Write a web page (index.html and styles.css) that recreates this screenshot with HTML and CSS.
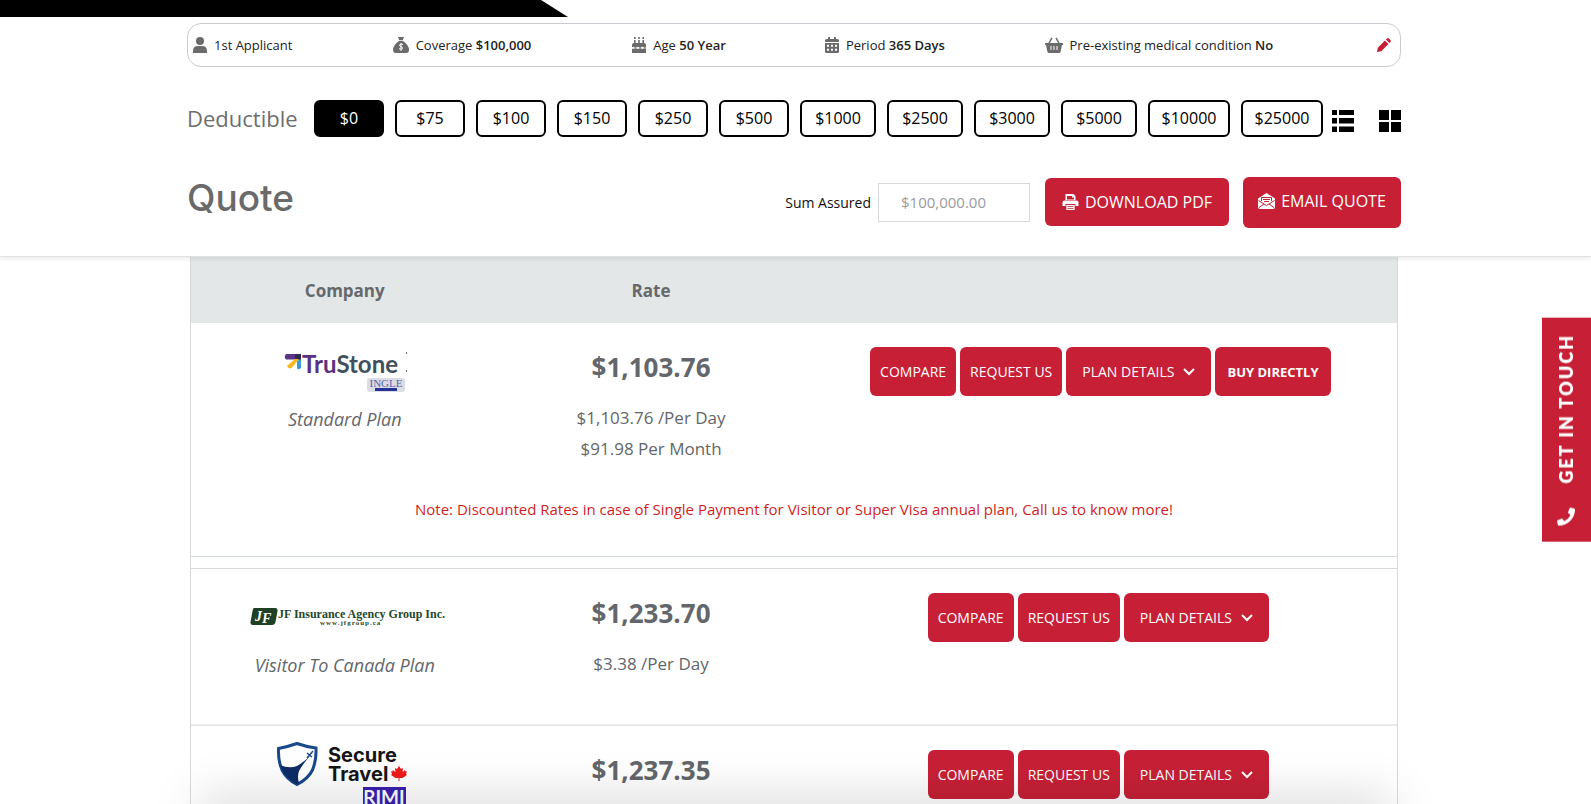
FILE: index.html
```html
<!DOCTYPE html>
<html lang="en">
<head>
<meta charset="utf-8">
<title>Quote</title>
<link rel="stylesheet" href="styles.css">
</head>
<body>
<header class="top">
  <div class="banner"></div>
  <div class="wrap">
    <ul class="summary">
      <li><svg class="ico" viewBox="0 0 14 16"><circle cx="7" cy="4" r="4"/><path d="M0 16v-2q0-5 5-5h4q5 0 5 5v2z"/></svg>1st Applicant</li>
      <li><svg class="ico" viewBox="0 0 16 16"><path d="M5 0h6L9.800 3.200H6.200zM6 4h4q6 4 6 9 0 3-3 3H3q-3 0-3-3 0-5 6-9z"/><path class="cut" d="M10 7.500Q8 6.400 6.800 7.600 6 9 8 9.700q2.300.7 1.400 2-1.200 1.200-3.400 0M8 6v8"/></svg>Coverage <b>$100,000</b></li>
      <li><svg class="ico" viewBox="0 0 14 16"><path d="M2 0h1.600v2H2zM6.200 0h1.600v2H6.200zM10.400 0H12v2h-1.600zM2 3h1.600v3h2.600V3h1.600v3h2.600V3H12v3q2 0 2 2v2.200q-1.200 1-2.300 0t-2.400 0-2.300 0-2.400 0-2.300 0-2.300 0V8q0-2 2-2zM0 11.600q1.200.8 2.300 0t2.400 0 2.300 0 2.400 0 2.300 0 2.300 0V16H0z"/></svg>Age <b>50 Year</b></li>
      <li><svg class="ico" viewBox="0 0 14 16"><path d="M3 0h2v2h4V0h2v2h1.500Q14 2 14 3.500V5H0V3.500Q0 2 1.500 2H3zM0 6h14v8.500q0 1.500-1.500 1.500h-11Q0 16 0 14.500z"/><path class="cut wide" d="M2 8.800h10M2 12.800h10" stroke-dasharray="2 2"/></svg>Period <b>365 Days</b></li>
      <li><svg class="ico" viewBox="0 0 18 16"><path d="M0 6h18v2h-1l-1.400 6.700Q15.300 16 14 16H4q-1.300 0-1.600-1.300L1 8H0z"/><path class="line" d="M3.500 7 7 .8M14.500 7 11 .8"/><path class="cut" d="M6 9v4M9 9v4M12 9v4"/></svg>Pre-existing medical condition <b>No</b></li>
      <li><button class="plain" aria-label="Edit"><svg class="pencil" viewBox="0 0 14 14"><path d="M0 14l.8-4.200L8 2.500 11.500 6 4.200 13.200zM9 1.600l1-1q1-1 2 0L13.400 2q1 1 0 2l-1 1z"/></svg></button></li>
    </ul>
    <div class="deduct">
      <h2 class="deduct-title">Deductible</h2>
      <div class="chips">
        <button class="chip on">$0</button>
        <button class="chip">$75</button>
        <button class="chip">$100</button>
        <button class="chip">$150</button>
        <button class="chip">$250</button>
        <button class="chip">$500</button>
        <button class="chip mid">$1000</button>
        <button class="chip mid">$2500</button>
        <button class="chip mid">$3000</button>
        <button class="chip mid">$5000</button>
        <button class="chip big">$10000</button>
        <button class="chip big">$25000</button>
      </div>
      <div class="views">
        <button class="plain" aria-label="List view"><svg class="view" viewBox="0 0 22 22"><path d="M0 0h5v5H0zM7 0h15v5H7zM0 8h5v5.500H0zM7 8h15v5.500H7zM0 16.500h5V22H0zM7 16.500h15V22H7z"/></svg></button>
        <button class="plain" aria-label="Grid view"><svg class="view" viewBox="0 0 22 22"><path d="M0 0h10v10H0zM12 0h10v10H12zM0 12h10v10H0zM12 12h10v10H12z"/></svg></button>
      </div>
    </div>
    <div class="quote">
      <h1 class="quote-title">Quote</h1>
      <div class="tools">
        <label class="sum-label" for="sum">Sum Assured</label>
        <input class="sum" id="sum" type="text" placeholder="$100,000.00">
        <button class="btn pdf"><svg class="btn-ico" viewBox="0 0 16 16"><path d="M3 0h8l2 2v4H3zM2 6.500h12q2 0 2 2V12h-3v-2H3v2H0V8.500q0-2 2-2zM3.800 11h8.400v5H3.800z"/><path class="red" d="M4.500 2v3.500h7V3.500H9.500V2z M5 12.200h6v.8H5zM5 14h6v.8H5z"/></svg>DOWNLOAD PDF</button>
        <button class="btn email"><svg class="btn-ico" viewBox="0 0 17 16"><path d="M0 5.500 8.500 0 17 5.500V14q0 2-2 2H2q-2 0-2-2z"/><path class="redline" d="M3.500 8V4.500h10V8M5 6.500h7M6 8.500h5M.5 7.500l8 5 8-5M1 14.500l5-3.500M16 14.500 11 11"/></svg>EMAIL QUOTE</button>
      </div>
    </div>
  </div>
</header>

<main class="wrap main">
  <table class="rates">
    <thead>
      <tr><th class="c-company">Company</th><th class="c-rate">Rate</th><th class="c-act"></th></tr>
    </thead>
    <tbody>
      <tr class="row">
        <td>
          <svg class="logo" viewBox="2 0 200 72" role="img" aria-label="TruStone Ingle">
            <path fill="#5b3486" d="M43 20h14v5.500H43q-2.500-2.700 0-5.500z"/><path fill="#2f2a55" d="M52 20h6v6h-6z"/><path fill="#f5b81c" d="M44 32l8-7h4l-7.500 9q-3 1.500-4.500-2z"/><path fill="#3d9bd4" d="M54 27l4-2v9l-2.500 1.500q-1.500-.5-1.500-2z"/>
            <text class="trustone" x="59" y="39"><tspan fill="#5a3180">Tru</tspan><tspan fill="#41505c">Stone</tspan></text>
            <rect x="124" y="44" width="38" height="14" rx="3" fill="#dcdde4"/>
            <text class="ingle" x="143" y="53">INGLE</text><path fill="#26319a" d="M132 54h22v3h-22z"/>
            <path fill="#777" d="M163 18h1v2h-1zM163 36h1v2h-1z"/>
          </svg>
          <p class="plan">Standard Plan</p>
        </td>
        <td>
          <p class="price">$1,103.76</p>
          <p class="per">$1,103.76 /Per Day</p>
          <p class="per">$91.98 Per Month</p>
        </td>
        <td>
          <div class="acts">
            <button class="btn act">COMPARE</button>
            <button class="btn act">REQUEST US</button>
            <button class="btn act details">PLAN DETAILS<svg class="chev" viewBox="0 0 12 8"><path d="M1 1l5 5 5-5"/></svg></button>
            <button class="btn act buy">BUY DIRECTLY</button>
          </div>
        </td>
      </tr>
      <tr><td class="note" colspan="3">Note: Discounted Rates in case of Single Payment for Visitor or Super Visa annual plan, Call us to know more!</td></tr>
      <tr class="gap"><td colspan="3"></td></tr>
      <tr class="row tall">
        <td>
          <svg class="logo" viewBox="1 -1 200 72" role="img" aria-label="JF Insurance Agency Group Inc.">
            <path fill="#1f4023" d="M10 27h21q3 0 2.500 3l-2 11q-.6 3-3.500 3H9q-3 0-2.500-3l2-11q.5-3 1.500-3z"/>
            <text class="jf" x="11" y="40">J<tspan dy="2">F</tspan></text>
            <text class="jf-name" x="34" y="37">JF Insurance Agency Group Inc.</text>
            <text class="jf-web" x="76" y="44">www.jfgroup.ca</text>
          </svg>
          <p class="plan">Visitor To Canada Plan</p>
        </td>
        <td>
          <p class="price">$1,233.70</p>
          <p class="per">$3.38 /Per Day</p>
        </td>
        <td>
          <div class="acts">
            <button class="btn act">COMPARE</button>
            <button class="btn act">REQUEST US</button>
            <button class="btn act details">PLAN DETAILS<svg class="chev" viewBox="0 0 12 8"><path d="M1 1l5 5 5-5"/></svg></button>
          </div>
        </td>
      </tr>
      <tr class="row tall">
        <td>
          <svg class="logo" viewBox="1 -1 200 72" role="img" aria-label="Secure Travel RIMI">
            <path fill="#fff" stroke="#17498c" stroke-width="3" d="M34.500 10.500Q43 9 53 5.500q10 3.500 19 4.500.5 12-3.500 22-4.500 9-15.500 14.500Q42.500 41 38 32q-4-9-3.500-21.500z"/>
            <path fill="#0d2c66" d="M36 27q9 4 17 1 7-4 13-10-8 9-11 15-2 6 0 12l-2 1.500Q40 40 36 27z"/><path stroke="#17498c" stroke-width="1.500" d="M63 15l5 4M69 13l-6 7"/>
            <text class="secure" x="84" y="24">Secure</text><text class="secure" x="84" y="43">Travel</text>
            <path fill="#f01a1a" d="M155 28l2 3 2-1-.5 4 2.500-2 .5 1.500 1.500-.2-1 2.700 1 1-4.500 3h-3v3h-1v-3h-3l-4.500-3 1-1-1-2.700 1.500.2.500-1.500 2.500 2-.5-4 2 1z"/>
            <path fill="#3c1fb0" d="M119 49h43v23h-43z"/><text class="rimi" x="140" y="66">RIMI</text>
          </svg>
          <p class="plan">Standard Plan</p>
        </td>
        <td>
          <p class="price">$1,237.35</p>
        </td>
        <td>
          <div class="acts">
            <button class="btn act">COMPARE</button>
            <button class="btn act">REQUEST US</button>
            <button class="btn act details">PLAN DETAILS<svg class="chev" viewBox="0 0 12 8"><path d="M1 1l5 5 5-5"/></svg></button>
          </div>
        </td>
      </tr>
    </tbody>
  </table>
</main>

<a class="touch" href="#contact"><svg class="phone" viewBox="0 0 512 512"><path d="M493 25 389 1c-11-3-23 3-27 14l-48 112c-4 10-1 21 7 28l61 50c-36 76-98 139-177 177l-50-61c-7-8-18-11-28-7L15 362c-11 5-17 16-14 27l24 104c3 11 12 19 24 19 256 0 463-207 463-463 0-12-8-21-19-24z"/></svg><span>GET IN TOUCH</span></a>
<div class="edge"></div>
</body>
</html>
```
FILE: styles.css
```css
* { box-sizing: border-box; }
html { height: 100%; }
body {
  margin: 0;
  height: 100%;
  overflow: hidden;
  background: #fff;
  color: #222;
  font-family: "Open Sans", "Noto Sans", sans-serif;
  font-size: 13px;
}
h1, h2, p, ul { margin: 0; padding: 0; }
button, input { font: inherit; }
button { cursor: pointer; }
.wrap { padding: 0 190px 0 187px; }
.top {
  position: relative;
  background: #fff;
  border-bottom: 1px solid #dfe1e3;
  box-shadow: 0 2px 5px rgba(0, 0, 0, .08);
}
.banner {
  height: 17px;
  width: 568px;
  background: #000;
  clip-path: polygon(0 0, 541px 0, 100% 100%, 0 100%);
}
.summary {
  display: grid;
  grid-template-columns: 200fr 240fr 193fr 220fr 333fr 23px;
  align-items: center;
  height: 44px;
  margin-top: 6px;
  padding: 0 0 0 5px;
  border: 1px solid #c9ccd0;
  border-radius: 14px;
  list-style: none;
}
.summary li { display: flex; align-items: center; white-space: pre; }
.summary b { font-weight: 600; }
.ico { height: 16px; margin-right: 7px; fill: #6b6b6b; }
.cut { fill: none; stroke: #fff; stroke-width: 1; }
.wide { stroke-width: 2; }
.line { fill: none; stroke: #6b6b6b; stroke-width: 1.500; }
.plain { display: block; padding: 0; border: 0; background: none; }
.pencil { display: block; width: 14px; height: 14px; fill: #c72036; }
.deduct { display: flex; align-items: center; margin-top: 32px; }
.deduct-title { color: #6d6e70; font-size: 22px; font-weight: 400; line-height: 38px; }
.chips { display: flex; gap: 11px; margin: 0 9px 0 auto; }
.chip {
  width: 70px;
  height: 37px;
  padding: 0 0 1px;
  border: 2px solid #000;
  border-radius: 6px;
  background: #fff;
  color: #000;
  font-size: 16px;
}
.chip.on { background: #000; color: #fff; }
.chip.mid { width: 76px; }
.chip.big { width: 82px; }
.views { display: flex; gap: 25px; padding-top: 6px; }
.view { display: block; width: 22px; height: 22px; }
.quote { display: flex; justify-content: space-between; height: 119px; padding-top: 39px; }
.quote-title { color: #6a6a6b; font-family: Inter, sans-serif; font-size: 37px; font-weight: 500; line-height: 44px; }
.tools { display: flex; align-items: center; height: 52px; }
.sum-label { margin-right: 7px; color: #111; font-size: 14px; }
.sum { width: 152px; height: 39px; margin-right: 15px; padding: 0 22px; border: 1px solid #d9d9db; color: #333; font-size: 15px; }
.sum::placeholder { color: #999ba0; opacity: 1; }
.btn { display: flex; align-items: center; justify-content: center; border: 0; border-radius: 6px; background: #c72036; color: #fff; white-space: nowrap; }
.btn-ico { width: 17px; height: 16px; margin-right: 6px; fill: #fff; }
.red { fill: #c72036; }
.btn-ico .redline { fill: none; stroke: #c72036; stroke-width: 1; }
.pdf { width: 184px; height: 48px; margin-right: 14px; font-size: 16px; }
.email { width: 158px; height: 51px; padding-bottom: 4px; font-size: 16px; }
.main { padding: 0 193px 0 190px; }
.rates { width: 100%; border-collapse: separate; border-spacing: 0; border: solid #d6dadc; border-width: 0 1px; color: #63666a; table-layout: fixed; }
.rates th { height: 66px; padding: 0; background: #e3e7e8; color: #66696b; font-size: 17px; font-weight: 700; }
.c-company { width: 25.500%; }
.c-rate { width: 25.300%; }
.rates td { padding: 0; text-align: center; vertical-align: top; }
.logo { display: block; width: 200px; height: 72px; margin: 11px auto 0; overflow: visible; }
.plan { font-size: 18px; font-style: italic; line-height: 26px; }
.price { padding: 23px 0 14px; font-size: 26px; font-weight: 700; line-height: 42px; }
.per { font-size: 17px; line-height: 31px; }
.acts { display: flex; justify-content: center; gap: 4px; padding-top: 24px; }
.tall .acts { padding-right: 4px; }
.act { height: 49px; padding: 0 10px; font-size: 14px; }
.details { padding: 0 16px; }
.buy { padding: 0 12px; font-size: 13px; font-weight: 700; }
.chev { width: 12px; height: 8px; margin-left: 9px; fill: none; stroke: #fff; stroke-width: 2; }
.rates .note { height: 93px; padding-bottom: 2px; border-bottom: 1px solid #d6dde0; color: #cf1f1f; font-size: 15px; vertical-align: middle; }
.gap td { height: 12px; border-bottom: 1px solid #d6dadc; }
.tall td { height: 157px; border-bottom: 2px solid #e6e8e9; }
.trustone { font: 700 24px Lato, sans-serif; }
.ingle { fill: #5a63a8; font: 11px "Liberation Serif", serif; text-anchor: middle; }
.jf { fill: #fff; font: italic 700 14px "Liberation Serif", serif; }
.jf-name { fill: #24482a; font: 700 12px "Liberation Serif", serif; }
.jf-web { fill: #24482a; font: 700 7px "Liberation Serif", serif; letter-spacing: 1px; }
.secure { fill: #161616; font: 700 20px Inter, sans-serif; }
.rimi { fill: #fff; font: 700 19px Lato, sans-serif; text-anchor: middle; }
.touch {
  position: fixed;
  top: 318px;
  right: 0;
  display: flex;
  align-items: center;
  gap: 24px;
  width: 49px;
  padding: 16px 0;
  writing-mode: vertical-rl;
  transform: rotate(180deg);
  background: #c72036;
  color: #fff;
  font: 800 18px Lato, sans-serif;
  letter-spacing: 2px;
  text-decoration: none;
}
.phone { width: 18px; height: 18px; fill: #fff; transform: rotate(180deg); }
.edge {
  position: fixed;
  right: 200px;
  bottom: -20px;
  left: 200px;
  height: 20px;
  box-shadow: 0 0 50px rgba(0, 0, 0, .28);
  pointer-events: none;
}
```
